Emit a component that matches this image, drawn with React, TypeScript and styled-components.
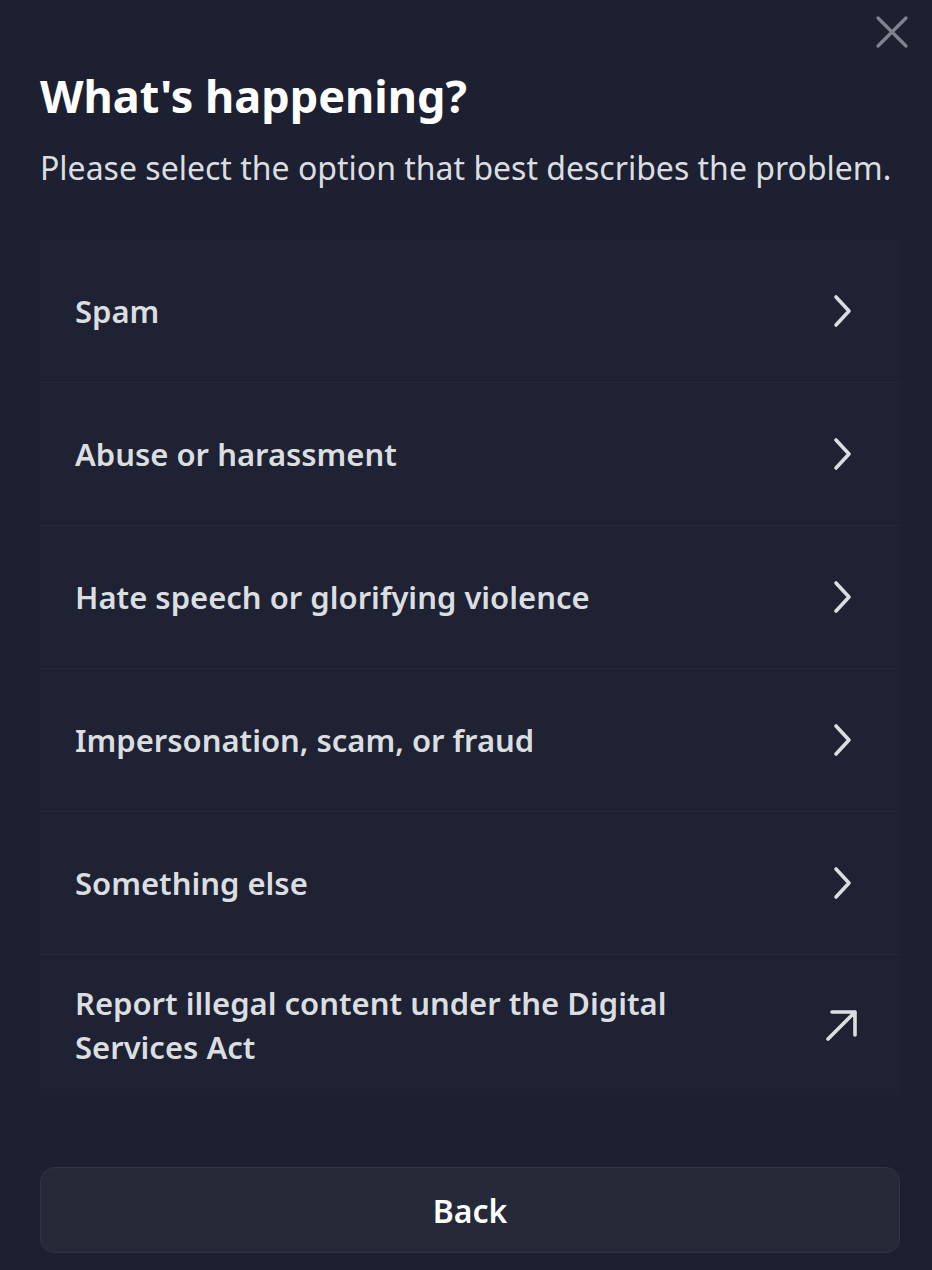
import styled, { createGlobalStyle } from 'styled-components'

const GlobalStyle = createGlobalStyle`
  html, body {
    margin: 0;
    padding: 0;
    background: #1d2030;
  }
  body {
    font-family: 'Noto Sans', 'Open Sans', sans-serif;
    -webkit-font-smoothing: antialiased;
  }
`

const Modal = styled.main`
  position: relative;
  box-sizing: border-box;
  width: 932px;
  min-height: 1270px;
  padding: 70px 32px 0 40px;
  background: #1d2030;
  color: #dbdee1;
`

const CloseButton = styled.button`
  position: absolute;
  top: 14px;
  right: 22px;
  width: 36px;
  height: 36px;
  padding: 0;
  border: 0;
  background: none;
  display: flex;
  align-items: center;
  justify-content: center;
  color: #80848e;
  cursor: pointer;
`

const Title = styled.h1`
  margin: 0;
  font-size: 45px;
  line-height: 52px;
  font-weight: 700;
  color: #ffffff;
`

const Subtitle = styled.p`
  margin: 26px 0 0;
  font-size: 32px;
  line-height: 40px;
  font-weight: 400;
  color: #dbdee1;
  white-space: nowrap;
`

const List = styled.ul`
  list-style: none;
  margin: 52px 0 0;
  padding: 0;
  width: 860px;
`

const Row = styled.li<{ $last?: boolean }>`
  box-sizing: border-box;
  display: flex;
  align-items: center;
  justify-content: space-between;
  min-height: ${(p) => (p.$last ? '140px' : '143px')};
  padding: 0 44px 0 35px;
  background: #1e2232;
  border-bottom: ${(p) => (p.$last ? 'none' : '1px solid #242839')};
  cursor: pointer;
`

const Label = styled.span`
  max-width: 640px;
  font-size: 31px;
  line-height: 44px;
  font-weight: 600;
  color: #dbdee1;
`

const ArrowIcon = styled.svg`
  margin-right: -3px;
`

const BackButton = styled.button`
  display: block;
  box-sizing: border-box;
  width: 860px;
  height: 86px;
  margin-top: 72px;
  border: 1px solid #2e3242;
  border-radius: 14px;
  background: #262937;
  color: #ffffff;
  font-family: inherit;
  font-size: 32px;
  font-weight: 600;
  cursor: pointer;
`

const Chevron = () => (
  <svg width="26" height="34" viewBox="0 0 26 34" fill="none">
    <path d="M6 3 L19 17 L6 31" stroke="#dbdee1" strokeWidth="3.6" strokeLinecap="round" strokeLinejoin="round" />
  </svg>
)

const ExternalArrow = () => (
  <ArrowIcon width="36" height="36" viewBox="0 0 36 36" fill="none">
    <path d="M5 32 L32 5 M9 5 H32 V28" stroke="#dbdee1" strokeWidth="3.6" strokeLinecap="round" strokeLinejoin="round" />
  </ArrowIcon>
)

const options = [
  'Spam',
  'Abuse or harassment',
  'Hate speech or glorifying violence',
  'Impersonation, scam, or fraud',
  'Something else',
]

const App = () => {
  return (
    <>
      <GlobalStyle />
      <Modal>
        <CloseButton aria-label="Close">
          <svg width="34" height="34" viewBox="0 0 34 34" fill="none">
            <path d="M3 3 L31 31 M31 3 L3 31" stroke="currentColor" strokeWidth="3.2" strokeLinecap="round" />
          </svg>
        </CloseButton>
        <Title>What's happening?</Title>
        <Subtitle>Please select the option that best describes the problem.</Subtitle>
        <List>
          {options.map((label) => (
            <Row key={label}>
              <Label>{label}</Label>
              <Chevron />
            </Row>
          ))}
          <Row $last>
            <Label>Report illegal content under the Digital Services Act</Label>
            <ExternalArrow />
          </Row>
        </List>
        <BackButton>Back</BackButton>
      </Modal>
    </>
  )
}

export default App
